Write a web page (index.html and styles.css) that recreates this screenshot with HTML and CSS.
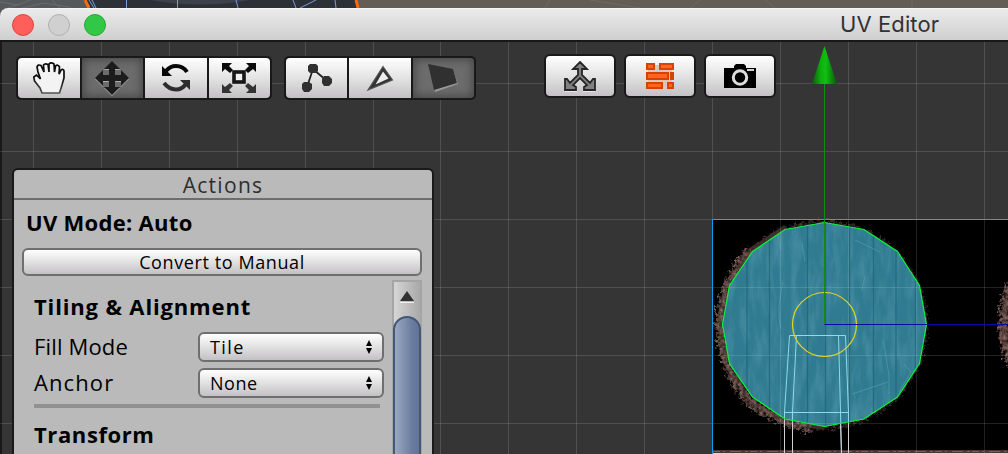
FILE: index.html
```html
<!DOCTYPE html>
<html lang="en">
<head>
    <meta charset="UTF-8">
    <meta name="viewport" content="width=device-width, initial-scale=1.0">
    <title>UV Editor</title>
    <link rel="stylesheet" href="styles.css">
</head>
<body>

    <!-- scene view behind the window -->
    <svg class="scene" viewBox="0 0 1008 14" width="1008" height="14">
        <rect width="1008" height="14" fill="#635d56"/>
        <path d="M0 0H86L94 14H0Z" fill="#55595b"/>
        <path d="M0 2L18 5L30 0M22 8L44 3L70 7M8 8L20 4M52 0L60 8" stroke="#686c6c" fill="none"/>
        <path d="M84 0H357V14H92Z" fill="#2c3037"/>
        <path d="M150 0Q200 9 250 0Z" fill="#3d4149"/>
        <path d="M126.500 0V8M177.500 0V8M236 0L238 8M293 0L296 8M300 8L316 0M335 0L336 8M89 0L94 8M92 0L96 8" stroke="#7d9cd6" fill="none"/>
        <path d="M85 0L89 8M356 0L358 8" stroke="#ff6a0a" stroke-width="3"/>
        <path d="M550 0L545 8M590 0L640 8M700 0L690 8M765 0L775 8M912 0V8" stroke="#706a63" fill="none"/>
    </svg>

    <div class="window">
        <div class="titlebar">
            <span class="light red"></span>
            <span class="light gray"></span>
            <span class="light green"></span>
            <span class="title">UV Editor</span>
        </div>

        <div class="canvas">
            <svg class="stage" viewBox="0 42 1008 412" width="1008" height="412">
                <defs>
                    <filter id="bark" x="-10%" y="-10%" width="120%" height="120%" color-interpolation-filters="sRGB">
                        <feTurbulence type="fractalNoise" baseFrequency="0.3" numOctaves="3" seed="4" result="n"/>
                        <feColorMatrix in="n" type="matrix" values=".5 0 0 0 .14  .42 0 0 0 .08  .4 0 0 0 .07  0 0 0 2.500 -.45" result="c"/>
                        <feDisplacementMap in="SourceGraphic" in2="n" scale="12" xChannelSelector="R" yChannelSelector="G" result="d"/>
                        <feComposite in="c" in2="d" operator="in"/>
                    </filter>
                    <filter id="grain" x="0" y="0" width="100%" height="100%">
                        <feTurbulence type="fractalNoise" baseFrequency="0.12 0.03" numOctaves="4" seed="9"/>
                        <feColorMatrix type="matrix" values="0 0 0 0 .35  0 0 0 0 .65  0 0 0 0 .74  1.200 0 0 0 -.45"/>
                    </filter>
                    <clipPath id="face">
                        <path d="M824.500 222.500L785 229.500L752.500 251.500L729.500 285.500L722.500 324.500L729.500 363.500L752.500 397L785 419L824.500 426.500L864 419L897.500 397L919.500 363.500L926.500 324.500L919.500 285.500L897.500 251.500L864 229.500Z"/>
                    </clipPath>
                    <linearGradient id="cone">
                        <stop offset="0" stop-color="#0a5c0a"/>
                        <stop offset=".35" stop-color="#0fae0f"/>
                        <stop offset=".55" stop-color="#10c010"/>
                        <stop offset="1" stop-color="#0a560a"/>
                    </linearGradient>
                </defs>

                <!-- texture -->
                <rect x="712" y="219" width="296" height="235" fill="#000"/>
                <circle cx="823" cy="325" r="103" fill="none" stroke="#5d4641" stroke-width="3" filter="url(#bark)" opacity=".6"/>
                <path d="M785 227L750 250L726 285L720 325L726 364L750 400L785 423L824 428" fill="none" stroke="#49352f" stroke-width="4" opacity=".8"/>
                <path d="M750 250Q721 285 720 325Q721 364 746 398Q765 418 812 428" fill="none" stroke="#5d4641" stroke-width="10" filter="url(#bark)"/>
                <ellipse cx="1024" cy="324" rx="26" ry="54" fill="#5d4641" filter="url(#bark)"/>
                <ellipse cx="1024" cy="324" rx="22" ry="48" fill="#5d4641" filter="url(#bark)"/>
                <rect x="713" y="450" width="295" height="3" fill="#4c3734"/>
                <path d="M713 451.500H1008" stroke="#7a5d58" stroke-dasharray="7 3 2 5 11 4 3 2"/>
                <path d="M713 453.500H1008" stroke="#ddd4d2"/>

                <!-- selected face -->
                <g clip-path="url(#face)">
                    <rect x="720" y="220" width="210" height="210" fill="#307b91"/>
                    <rect x="720" y="220" width="210" height="210" filter="url(#grain)" opacity=".35"/>
                    <path d="M747 220V430M769.500 220V430M807.500 220V430M825.500 220V430M849.500 220V430M873.500 220V430M896 220V430M915.500 220V430" stroke="#20657a" stroke-width="1.300" opacity=".8"/>
                    <path d="M783 282Q776 312 781 329M802 243L805 261M777 232L781 250M883 340L889 375V394M865 276L862 290M852 394L888 382M904 364L911 372L899 392M855 240L880 252" stroke="#5aa0b2" opacity=".6" fill="none"/>
                </g>

                <!-- grid -->
                <path class="grid" d="M33.500 42V454M101.500 42V454M169.500 42V454M237.500 42V454M305.500 42V454M373.500 42V454M440.500 42V454M508.500 42V454M576.500 42V454M644.500 42V454M712.500 42V454M780.500 42V454M848.500 42V454M916.500 42V454M984.500 42V454M0 83.500H1008M0 151.500H1008M0 219.500H1008M0 287.500H1008M0 355.500H1008M0 423.500H1008"/>
                <path d="M712 219.500H1008" stroke="#868686"/>
                <path d="M712.500 219V454" stroke="#0c9cf0"/>

                <!-- other faces -->
                <path class="wire" d="M789.500 335.500H845.500M789.500 335.500L784.500 412.500H848.500L845.500 335.500M796.500 335.500L792.500 412.500M838.500 335.500L840.500 412.500"/>
                <path class="wire" d="M784.500 412V454M792.500 412V454M840.500 412L841.500 454M848.500 412V454"/>
                <path d="M784.500 420V454M792.500 422V454M840.500 424L841.500 454M848.500 423V454" stroke="#cfcfcf"/>

                <path class="face" d="M824.500 222.500L785 229.500L752.500 251.500L729.500 285.500L722.500 324.500L729.500 363.500L752.500 397L785 419L824.500 426.500L864 419L897.500 397L919.500 363.500L926.500 324.500L919.500 285.500L897.500 251.500L864 229.500Z"/>

                <!-- move handle -->
                <circle cx="824.500" cy="324.500" r="32" fill="none" stroke="#e2d81c" stroke-width="1.200"/>
                <path d="M824.500 324.500H1008" stroke="#0b0ba4"/>
                <path d="M824.500 83V324" stroke="#0f8c14"/>
                <path d="M824.500 46L837 84H812Z" fill="url(#cone)"/>
            </svg>

            <div class="toolbar">
                <div class="group">
                    <button class="tool">
                        <svg width="32" height="34" viewBox="0 0 32 34">
                            <linearGradient id="ink" x1="0" y1="0" x2="0" y2="1">
                                <stop offset=".5" stop-color="#0c0c0c"/>
                                <stop offset="1" stop-color="#555"/>
                            </linearGradient>
                            <path d="M9 32L7 27L1.500 20L.8 16L3.500 14L7.500 18L5 11L4 6Q5 3 8 4.500L11 11L10.500 4Q12 2 15 3.500L16 11V3Q18 .8 21 3L21.500 11L22.500 5Q25 3 26.500 6L26 13L28 9Q30.500 7.500 31 10V17L29 24L26.500 32Z" fill="#f3f3f3" stroke="url(#ink)" stroke-width="1.700"/>
                        </svg>
                    </button>
                    <button class="tool on">
                        <svg width="36" height="36" viewBox="0 0 36 36">
                            <path d="M18 1L26 9H21V15H27V10L35 18L27 26V21H21V27H26L18 35L10 27H15V21H9V26L1 18L9 10V15H15V9H10Z" fill="#a8a8a8" transform="translate(0 1)"/>
                            <path d="M18 1L26 9H21V15H27V10L35 18L27 26V21H21V27H26L18 35L10 27H15V21H9V26L1 18L9 10V15H15V9H10Z" fill="#1c1c1c"/>
                        </svg>
                    </button>
                    <button class="tool">
                        <svg width="30" height="30" viewBox="0 0 30 30">
                            <path d="M5 8Q9 3 15 3Q22 3 26 9" fill="none" stroke="#080808" stroke-width="4"/>
                            <path d="M1 3V13H11Z" fill="#080808"/>
                            <path d="M3 20Q8 26.500 15 26.500Q21 26.500 25 21" fill="none" stroke="#2d2d2d" stroke-width="4"/>
                            <path d="M29 17V27L19 17Z" fill="#2d2d2d"/>
                        </svg>
                    </button>
                    <button class="tool">
                        <svg width="36" height="32" viewBox="0 0 36 32">
                            <rect x="13" y="10" width="10" height="10" fill="#f0f0f0" stroke="#161616" stroke-width="3.600"/>
                            <path d="M1 1H11L8 4L12 8L9 11L4 7L1 10ZM35 1H25L28 4L24 8L27 11L32 7L35 10Z" fill="#0a0a0a"/>
                            <path d="M1 31H11L8 28L12 24L9 21L4 25L1 22ZM35 31H25L28 28L24 24L27 21L32 25L35 22Z" fill="#333"/>
                        </svg>
                    </button>
                </div>

                <div class="group modes">
                    <button class="tool">
                        <svg width="32" height="30" viewBox="0 0 32 30">
                            <path d="M6 24L12 6L26 18" fill="none" stroke="#222" stroke-width="1.800"/>
                            <path d="M9 1H15L17 3V8L15 10H9L7 8V3ZM3 19H8L11 21V26L8 29H3L1 26V21ZM23 13H28L31 16V20L28 23H23L21 20V16Z" fill="#303030"/>
                        </svg>
                    </button>
                    <button class="tool">
                        <svg width="32" height="30" viewBox="0 0 32 30">
                            <path d="M19 3.500L28.500 17L4 27Z" fill="#333" stroke="#555" stroke-width="1.200"/>
                            <path d="M19 8.500L24.500 15.500L11.500 21.500Z" fill="#ececec"/>
                        </svg>
                    </button>
                    <button class="tool on">
                        <svg width="32" height="32" viewBox="0 0 32 32">
                            <path d="M2 3L26 8L31 22L8 30Z" fill="#999"/>
                            <path d="M1 2L26 7L30 21L7 28Z" fill="#303030"/>
                        </svg>
                    </button>
                </div>

                <div class="actions">
                    <button class="tool">
                        <svg width="34" height="32" viewBox="0 0 34 32">
                            <path d="M2 31.500H14M20 31.500H32" stroke="#e8e8e8"/>
                            <path d="M17 2L24 9H19V15L27 23L30 19H32V30H21V27L24 25L17 18L10 25L13 27V30H2V19H4L7 23L15 15V9H10Z" fill="#808080" stroke="#262626" stroke-width="1.800"/>
                        </svg>
                    </button>
                    <button class="tool">
                        <svg width="28" height="28" viewBox="0 0 28 28">
                            <path d="M2 3H26V25H2Z" fill="#dfc5b8"/>
                            <path d="M1 2H8V7H1ZM14 2H27V7H14ZM1 11H22V17H1ZM25 11H27V17H25ZM1 21H16V26H1ZM22 21H27V26H22Z" fill="#ff6420" stroke="#d94300" stroke-width="2"/>
                        </svg>
                    </button>
                    <button class="tool">
                        <svg width="32" height="26" viewBox="0 0 32 26">
                            <path d="M0 5H10V3L12 1H20L22 3V5H32V25H0Z" fill="#000"/>
                            <circle cx="16" cy="14.500" r="6.700" fill="#000" stroke="#ddd" stroke-width="3"/>
                            <path d="M23 7H30" stroke="#d0d0d0" stroke-width="2"/>
                        </svg>
                    </button>
                </div>
            </div>

            <div class="panel">
                <div class="panel-title">Actions</div>
                <div class="panel-body">
                    <h2 class="mode">UV Mode: Auto</h2>
                    <button class="convert">Convert to Manual</button>
                    <div class="scroll">
                        <div class="settings">
                            <h2 class="tiling">Tiling &amp; Alignment</h2>
                            <div class="row">
                                <label class="fill">Fill Mode</label>
                                <div class="select tile">Tile
                                    <svg width="6" height="14" viewBox="0 0 6 14"><path d="M3 0L6 6H0ZM0 8H6L3 14Z"/></svg>
                                </div>
                            </div>
                            <div class="row">
                                <label class="anchor">Anchor</label>
                                <div class="select">None
                                    <svg width="6" height="14" viewBox="0 0 6 14"><path d="M3 0L6 6H0ZM0 8H6L3 14Z"/></svg>
                                </div>
                            </div>
                            <div class="line"></div>
                            <h2 class="transform">Transform</h2>
                        </div>
                        <div class="scrollbar">
                            <div class="arrow"><svg width="14" height="12" viewBox="0 0 14 12"><path d="M0 11.500H14" stroke="#eee"/><path d="M7 0L14 10H0Z" fill="#333"/></svg></div>
                            <div class="thumb"></div>
                        </div>
                    </div>
                </div>
            </div>
        </div>
    </div>

</body>
</html>
```
FILE: styles.css
```css
* {
    box-sizing: border-box;
}
body {
    margin: 0;
    width: 1008px;
    height: 454px;
    overflow: hidden;
    position: relative;
    background: #333;
    font-family: "Open Sans", "Noto Sans", sans-serif;
    color: #000;
}
.scene {
    display: block;
    position: absolute;
    top: 0;
    left: 0;
}
.window {
    position: relative;
    margin-top: 8px;
    border-radius: 8px 0 0 0;
    overflow: hidden;
}
.titlebar {
    display: flex;
    align-items: center;
    height: 34px;
    padding: 0 0 0 12px;
    gap: 14px;
    background: linear-gradient(#ebebeb, #cfcfcf);
    border-top: 1px solid #f6f6f6;
    border-bottom: 2px solid #171717;
}
.light {
    width: 22px;
    height: 22px;
    border-radius: 50%;
    border: 1px solid;
}
.red {
    background: #ff5f5a;
    border-color: #e2443f;
}
.gray {
    background: #d0d0d0;
    border-color: #b0b0b0;
}
.green {
    background: #33c748;
    border-color: #1fab30;
}
.title {
    margin-left: 720px;
    padding-bottom: 2px;
    font-family: Inter, sans-serif;
    font-size: 22px;
    line-height: 30px;
    letter-spacing: .1px;
    color: #333;
    white-space: nowrap;
}
.canvas {
    position: relative;
    height: 412px;
    background: #353535;
    border-left: 2px solid #191919;
}
.stage {
    position: absolute;
    top: 0;
    left: -2px;
}
.grid {
    stroke: #fff;
    stroke-opacity: .13;
    fill: none;
}
.wire {
    stroke: #8fd9ec;
    fill: none;
}
.face {
    stroke: #0cf53c;
    stroke-width: 1.2;
    fill: none;
}
.toolbar {
    position: relative;
    display: flex;
    padding: 12px 0 0 14px;
}
.group, .actions {
    display: flex;
}
.group {
    width: 256px;
    height: 44px;
    margin-top: 2px;
    gap: 2px;
    padding: 2px;
    border-radius: 5px;
    background: #191919;
}
.modes {
    width: 192px;
    margin-left: 12px;
}
.tool {
    display: flex;
    align-items: center;
    justify-content: center;
    flex: 1;
    height: 40px;
    padding: 0;
    border: 0;
    background: linear-gradient(#fff, #e4e3e4 50%, #c3c1c3);
}
.tool svg {
    flex: none;
}
.tool:first-child {
    border-radius: 4px 0 0 4px;
}
.tool:last-child {
    border-radius: 0 4px 4px 0;
}
.on {
    background: #6c6c6c;
    box-shadow: inset 0 0 8px 2px #484848;
}
.actions {
    gap: 8px;
    margin-left: 68px;
}
.actions .tool {
    flex: none;
    width: 72px;
    height: 44px;
    border: 2px solid #191919;
    border-radius: 6px;
}
.panel {
    position: relative;
    width: 422px;
    height: 300px;
    margin: 68px 0 0 10px;
    border: 2px solid #1a1a1a;
    border-radius: 6px 6px 0 0;
    background: #bababa;
}
.panel-title {
    height: 30px;
    border-bottom: 2px solid #6d6d6d;
    text-align: center;
    font-size: 21px;
    line-height: 30px;
    letter-spacing: 1.3px;
    color: #2e2e2e;
}
.panel-body {
    padding: 6px 10px 0 8px;
}
h2 {
    margin: 0;
    font-size: 22px;
    line-height: 32px;
    white-space: nowrap;
}
.mode {
    padding-left: 4px;
    letter-spacing: .3px;
}
.convert {
    display: block;
    width: 400px;
    height: 28px;
    margin-top: 10px;
    padding: 0;
    border: 2px solid #6f6f6f;
    border-radius: 6px;
    background: linear-gradient(#fff, #e2e1e2 50%, #c3c1c3);
    font-family: inherit;
    font-size: 18px;
    line-height: 24px;
    letter-spacing: .6px;
    color: #000;
}
.scroll {
    display: flex;
    justify-content: space-between;
    margin-top: 4px;
}
.settings {
    width: 362px;
    padding: 10px 0 0 12px;
}
.row {
    display: flex;
    justify-content: space-between;
    height: 30px;
    margin: 0 0 6px;
    width: 350px;
}
.tiling {
    margin-bottom: 10px;
    letter-spacing: .85px;
}
label {
    font-size: 22px;
    line-height: 28px;
    white-space: nowrap;
}
.fill {
    letter-spacing: .15px;
}
.anchor {
    letter-spacing: 1.1px;
}
.select {
    display: flex;
    align-items: center;
    justify-content: space-between;
    width: 186px;
    height: 30px;
    padding: 0 10px;
    border: 2px solid #6f6f6f;
    border-radius: 6px;
    background: linear-gradient(#fff, #e2e1e2 50%, #c3c1c3);
    font-size: 18px;
    line-height: 26px;
    letter-spacing: .5px;
}
.tile {
    letter-spacing: 1.4px;
}
.line {
    width: 346px;
    height: 4px;
    background: #919191;
}
.transform {
    margin-top: 10px;
    letter-spacing: .6px;
}
.scrollbar {
    width: 30px;
    height: 180px;
    border: 2px solid #a5a5a5;
    background: linear-gradient(to right, #d6d6d6, #a9a9a9);
}
.arrow {
    display: flex;
    justify-content: center;
    height: 34px;
    padding-top: 9px;
}
.thumb {
    width: 28px;
    height: 160px;
    margin-left: -1px;
    border: 2px solid #445778;
    border-radius: 14px;
    background: linear-gradient(to right, #9aa8c0, #6b7d9e 70%, #627394);
}
```
